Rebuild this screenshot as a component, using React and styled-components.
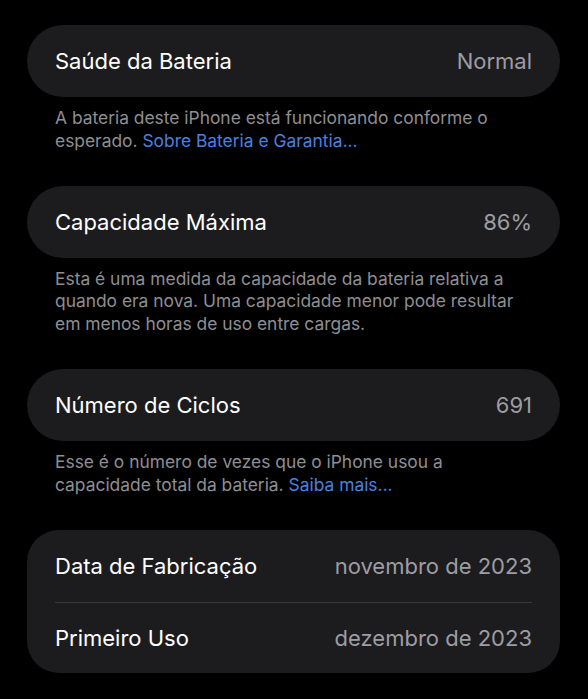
import React from 'react';
import styled, { createGlobalStyle } from 'styled-components';

const GlobalStyle = createGlobalStyle`
  html, body {
    margin: 0;
    background: #000;
  }
  body {
    font-family: Inter, "Noto Sans", "Liberation Sans", sans-serif;
    -webkit-font-smoothing: antialiased;
  }
`;

const sections = [
  {
    rows: [{ label: 'Saúde da Bateria', value: 'Normal' }],
    footer: 'A bateria deste iPhone está funcionando conforme o esperado.',
    link: 'Sobre Bateria e Garantia...',
  },
  {
    rows: [{ label: 'Capacidade Máxima', value: '86%' }],
    footer:
      'Esta é uma medida da capacidade da bateria relativa a quando era nova. Uma capacidade menor pode resultar em menos horas de uso entre cargas.',
  },
  {
    rows: [{ label: 'Número de Ciclos', value: '691' }],
    footer: 'Esse é o número de vezes que o iPhone usou a capacidade total da bateria.',
    link: 'Saiba mais...',
  },
  {
    rows: [
      { label: 'Data de Fabricação', value: 'novembro de 2023' },
      { label: 'Primeiro Uso', value: 'dezembro de 2023' },
    ],
  },
];

function App() {
  return (
    <>
      <GlobalStyle />
      <Page>
        {sections.map((section, i) => (
          <Section key={i}>
            <Card $multi={section.rows.length > 1}>
              {section.rows.map((row) => (
                <Row key={row.label}>
                  <Label>{row.label}</Label>
                  <Value>{row.value}</Value>
                </Row>
              ))}
            </Card>
            {section.footer && (
              <Footer>
                {section.footer}
                {section.link && (
                  <>
                    {' '}
                    <Link>{section.link}</Link>
                  </>
                )}
              </Footer>
            )}
          </Section>
        ))}
      </Page>
    </>
  );
}

export default App;

const Page = styled.div`
  padding: 25px 28px 26px 27px;
  display: flex;
  flex-direction: column;
  gap: 33px;
`;

const Section = styled.section`
  display: flex;
  flex-direction: column;
`;

const Card = styled.div`
  background: #1c1c1e;
  border-radius: ${(p) => (p.$multi ? '32px' : '36px')};
  display: flex;
  flex-direction: column;
  padding: 0 28px;
`;

const Row = styled.div`
  height: 72px;
  display: flex;
  align-items: center;
  justify-content: space-between;
  box-sizing: border-box;

  & + & {
    border-top: 1px solid #3a3a3c;
    height: 71px;
  }
`;

const Label = styled.span`
  color: #fff;
  font-size: 22px;
  letter-spacing: 0;
`;

const Value = styled.span`
  color: #9d9da3;
  font-size: 22px;
  letter-spacing: 0;
`;

const Footer = styled.p`
  margin: 0;
  padding: 10px 28px 0;
  color: #8e8e93;
  font-size: 17.4px;
  line-height: 22.8px;
`;

const Link = styled.span`
  color: #4a80e0;
`;
